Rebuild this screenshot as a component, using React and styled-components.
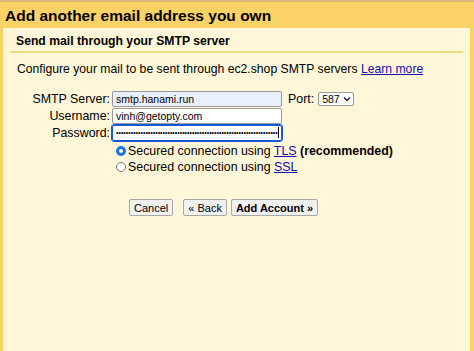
import React from 'react'
import styled, { createGlobalStyle } from 'styled-components'

const Global = createGlobalStyle`
  html, body {
    margin: 0;
    padding: 0;
    background: #fbd266;
  }
  body {
    font-family: Arial, "Liberation Sans", sans-serif;
    color: #000;
  }
`

function Chevron() {
  return (
    <svg width="8" height="6" viewBox="0 0 8 6">
      <path d="M1 1.5 L4 4.5 L7 1.5" fill="none" stroke="#222" strokeWidth="1.4" />
    </svg>
  )
}

const dots = '•'.repeat(66)

function App() {
  return (
    <>
      <Global />
      <Page>
        <Title>Add another email address you own</Title>
        <Panel>
          <SubHeading>Send mail through your SMTP server</SubHeading>
          <Intro>
            Configure your mail to be sent through ec2.shop SMTP servers <Link>Learn more</Link>
          </Intro>
          <Form>
            <Row>
              <Label>SMTP Server:</Label>
              <Field filled>smtp.hanami.run</Field>
              <PortLabel>Port:</PortLabel>
              <Select>587 <Chevron /></Select>
            </Row>
            <Row>
              <Label>Username:</Label>
              <Field>vinh@getopty.com</Field>
            </Row>
            <Row>
              <Label>Password:</Label>
              <Field focused>
                <Dots>{dots}</Dots>
                <Caret />
              </Field>
            </Row>
          </Form>
          <Options>
            <Option>
              <Radio checked />
              Secured connection using <Link>TLS</Link> <b>(recommended)</b>
            </Option>
            <Option>
              <Radio />
              Secured connection using <Link>SSL</Link>
            </Option>
          </Options>
          <Buttons>
            <Button>Cancel</Button>
            <Button>« Back</Button>
            <Button primary>Add Account »</Button>
          </Buttons>
        </Panel>
      </Page>
    </>
  )
}

export default App

const Page = styled.div`
  height: 351px;
  box-sizing: border-box;
  border-top: 2px solid #dcb77c;
  padding: 0 4px 0 3px;
  display: flex;
  flex-direction: column;
`

const Title = styled.h1`
  margin: 0;
  padding: 4px 2px 0;
  height: 26px;
  box-sizing: border-box;
  font-size: 15.5px;
  font-weight: bold;
  line-height: 20px;
`

const Panel = styled.div`
  flex: 1;
  background: #fff7d7;
  padding: 0 7px 0 7px;
`

const SubHeading = styled.h2`
  margin: 0;
  padding: 6px 0 0 6px;
  height: 25px;
  box-sizing: border-box;
  border-bottom: 2px solid #f3d98a;
  font-size: 12.2px;
  font-weight: bold;
  line-height: 15px;
`

const Intro = styled.p`
  margin: 0;
  padding: 8px 0 0 7px;
  font-size: 12.2px;
  line-height: 16px;
`

const Link = styled.a`
  color: #1a0dab;
  text-decoration: underline;
  cursor: pointer;
`

const Form = styled.div`
  margin-top: 13px;
  display: flex;
  flex-direction: column;
`

const Row = styled.div`
  display: flex;
  align-items: center;
  height: 17px;
`

const Label = styled.span`
  width: 100px;
  text-align: right;
  padding-right: 2px;
  font-size: 12.4px;
`

const Field = styled.div`
  width: 170px;
  height: 16px;
  box-sizing: border-box;
  border: 1px solid ${p => (p.focused ? '#1558d6' : '#9a9a9a')};
  outline: ${p => (p.focused ? '1px solid #1558d6' : 'none')};
  border-radius: 2px;
  background: ${p => (p.filled ? '#e8f0fe' : '#fff')};
  font-size: 10.5px;
  line-height: 14px;
  padding: 0 3px;
  display: flex;
  align-items: center;
  white-space: nowrap;
`

const Dots = styled.span`
  font-size: 7px;
  line-height: 14px;
`

const Caret = styled.span`
  width: 1px;
  height: 11px;
  background: #000;
`

const PortLabel = styled.span`
  margin-left: 6px;
  font-size: 12.4px;
`

const Select = styled.div`
  margin-left: 4px;
  height: 14px;
  box-sizing: border-box;
  border: 1px solid #9a9a9a;
  border-radius: 2px;
  background: #fff;
  font-size: 10.5px;
  line-height: 12px;
  padding: 0 2px 0 3px;
  display: flex;
  align-items: center;
  gap: 3px;
`

const Options = styled.div`
  margin-top: 2px;
  padding-left: 106px;
`

const Option = styled.label`
  display: block;
  font-size: 12.4px;
  line-height: 16px;
  white-space: nowrap;
`

const Radio = styled.span`
  display: inline-block;
  vertical-align: -1px;
  width: 10px;
  height: 10px;
  box-sizing: border-box;
  border-radius: 50%;
  margin-right: 2px;
  border: ${p => (p.checked ? '3px solid #1a73e8' : '1px solid #777')};
  background: #fff;
`

const Buttons = styled.div`
  margin-top: 24px;
  padding-left: 119px;
  display: flex;
  gap: 10px;
`

const Button = styled.button`
  font-family: Arial, "Liberation Sans", sans-serif;
  font-size: 11px;
  font-weight: ${p => (p.primary ? 'bold' : 'normal')};
  height: 17px;
  padding: 0 4px;
  background: #f1f1f1;
  border: 1px solid #a8a8a8;
  border-radius: 2px;
  color: #000;
  margin-left: ${p => (p.primary ? '-6px' : '0')};
`
